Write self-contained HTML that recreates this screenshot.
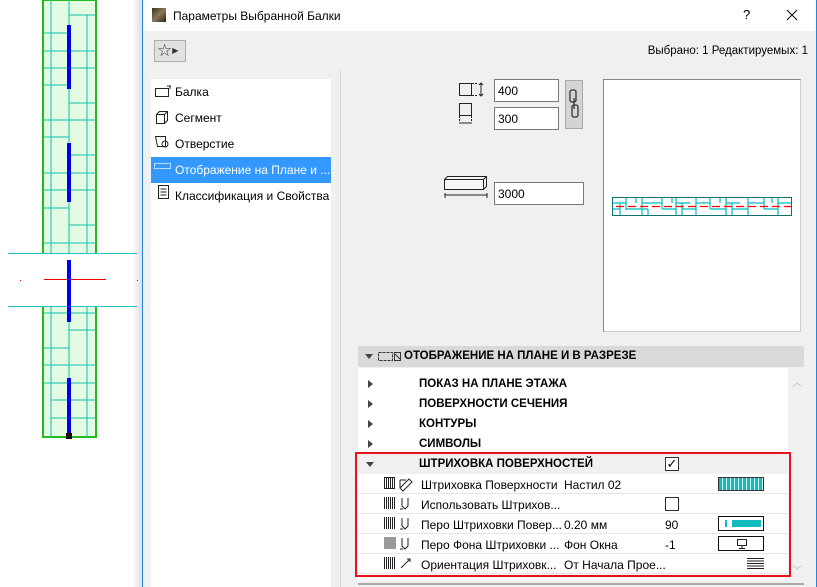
<!DOCTYPE html>
<html><head><meta charset="utf-8"><style>
*{box-sizing:border-box;margin:0;padding:0}
body{width:817px;height:587px;overflow:hidden;background:#fff;font-family:"Liberation Sans",sans-serif;font-size:12px;color:#000;position:relative}
.a{position:absolute}
.inp{position:absolute;background:#fff;border:1px solid #7a7a7a;height:23px;padding:4px 3px;font-size:12px}
.row{position:absolute;left:358px;width:430px;height:20px;font-size:12px}
.hd{font-weight:bold;font-size:11.5px}
.tri{position:absolute;left:10px;top:6px;width:0;height:0;border-left:5px solid #444;border-top:4px solid transparent;border-bottom:4px solid transparent}
.trid{position:absolute;left:8px;top:8px;width:0;height:0;border-top:5px solid #444;border-left:4px solid transparent;border-right:4px solid transparent}
.li{position:absolute;left:151px;width:180px;height:26px;padding:6px 0 0 24px}
</style></head><body>
<svg class="a" style="left:0;top:0" width="140" height="587">
<rect x="43" y="0" width="53" height="437" fill="#e3fbe3" stroke="#22bb22" stroke-width="2"/>
<g stroke="#10c0a8" stroke-width="1">
<line x1="69" y1="0" x2="69" y2="437"/>
<line x1="51" y1="0" x2="51" y2="437"/><line x1="87" y1="15" x2="87" y2="437"/>
<line x1="43" y1="33" x2="69" y2="33"/><line x1="69" y1="15" x2="96" y2="15"/>
<line x1="43" y1="51" x2="96" y2="51"/><line x1="43" y1="68" x2="96" y2="68"/>
<line x1="43" y1="85" x2="69" y2="85"/><line x1="69" y1="103" x2="96" y2="103"/>
<line x1="43" y1="120" x2="96" y2="120"/><line x1="43" y1="137" x2="69" y2="137"/>
<line x1="69" y1="155" x2="96" y2="155"/><line x1="43" y1="173" x2="96" y2="173"/>
<line x1="43" y1="190" x2="96" y2="190"/><line x1="43" y1="208" x2="69" y2="208"/>
<line x1="69" y1="225" x2="96" y2="225"/><line x1="43" y1="243" x2="96" y2="243"/>
<line x1="43" y1="313" x2="96" y2="313"/><line x1="69" y1="330" x2="96" y2="330"/>
<line x1="43" y1="348" x2="69" y2="348"/><line x1="43" y1="365" x2="96" y2="365"/>
<line x1="43" y1="383" x2="96" y2="383"/><line x1="51" y1="400" x2="96" y2="400"/>
<line x1="51" y1="418" x2="96" y2="418"/>
</g>
<rect x="8" y="253" width="130" height="53" fill="#fff"/>
<rect x="8" y="253" width="129" height="1" fill="#1fc2c8"/>
<rect x="8" y="306" width="129" height="1" fill="#1fc2c8"/>
<rect x="44" y="279" width="62" height="1" fill="#ee0000"/>
<rect x="20" y="280" width="1" height="1" fill="#e00"/><rect x="137" y="280" width="1" height="1" fill="#e00"/>
<g fill="#0000ee"><rect x="67" y="25" width="4" height="64"/><rect x="67" y="143" width="4" height="59"/><rect x="67" y="260" width="4" height="62"/><rect x="67" y="378" width="4" height="59"/></g>
<rect x="66" y="433" width="6" height="6" fill="#000"/>
</svg>
<div class="a" style="left:132px;top:0;width:10px;height:587px;background:linear-gradient(90deg,rgba(0,0,0,0),rgba(0,0,0,0.12))"></div>
<div class="a" style="left:142px;top:0;width:675px;height:587px;background:#f0f0f0;border-left:1px solid #1e88e5;border-right:1px solid #1e88e5"></div>
<div class="a" style="left:143px;top:0;width:673px;height:31px;background:#fff"></div>
<div class="a" style="left:152px;top:8px;width:14px;height:14px;background:linear-gradient(135deg,#3a3020,#8a7a5a 50%,#2a2418)"></div>
<div class="a" style="left:173px;top:9px;font-size:12px">Параметры Выбранной Балки</div>
<div class="a" style="left:743px;top:7px;font-size:13px">?</div>
<svg class="a" style="left:786px;top:9px" width="12" height="12" stroke="#111" stroke-width="1.1"><path d="M1 1l10 10M11 1L1 11"/></svg>
<div class="a" style="left:154px;top:40px;width:32px;height:22px;background:#e1e1e1;border:1px solid #adadad;font-size:17px;line-height:19px;padding-left:2px;color:#333">☆<span style="font-size:8px;vertical-align:3px">▶</span></div>
<div class="a" style="right:9px;top:45px;font-size:11.5px">Выбрано: 1 Редактируемых: 1</div>
<div class="a" style="left:151px;top:79px;width:180px;height:508px;background:#fff"></div>
<div class="li" style="top:79px">Балка</div>
<div class="li" style="top:105px">Сегмент</div>
<div class="li" style="top:131px">Отверстие</div>
<div class="li" style="top:157px;background:#3399ff;color:#fff">Отображение на Плане и ...</div>
<div class="li" style="top:183px">Классификация и Свойства</div>
<svg class="a" style="left:154px;top:84px" width="18" height="125" fill="none" stroke="#222">
<rect x="1.5" y="4.5" width="13" height="8"/><path d="M13 2h4M16 2v3"/>
<path d="M2.5 30.5l3-3h8v9l-3 3h-8zM2.5 30.5h8v9M10.5 30.5l3-3"/>
<path d="M1.5 52.5h10v10h-8zM8 60a3 3 0 1 0 6 0a3 3 0 1 0-6 0"/>
<rect x="0.5" y="79.5" width="16" height="5" stroke="#fff" stroke-dasharray="2 1"/>
<rect x="4.5" y="101.5" width="10" height="13"/><path d="M6.5 105h6M6.5 108h6M6.5 111h6"/>
</svg>
<div class="a" style="left:340px;top:70px;width:1px;height:517px;background:#d8d8d8"></div>
<svg class="a" style="left:458px;top:78px" width="30" height="55" fill="none" stroke="#222">
<rect x="1.5" y="5.5" width="12" height="12"/><path d="M14 5.5h6M14 17.5h6" stroke-dasharray="2 1"/><path d="M23 5v13M21 7l2-2 2 2M21 16l2 2 2-2"/>
<rect x="1.5" y="25.5" width="12" height="12"/><path d="M1.5 38v6M13.5 38v6" stroke-dasharray="2 1"/><path d="M1 45h13"/>
</svg>
<div class="inp" style="left:494px;top:79px;width:65px">400</div>
<div class="inp" style="left:494px;top:107px;width:65px">300</div>
<div class="a" style="left:565px;top:80px;width:18px;height:49px;background:#d4d4d4;border:1px solid #aaa"></div>
<svg class="a" style="left:568px;top:88px" width="12" height="32" fill="none" stroke="#333" stroke-width="1.3"><rect x="2" y="2" width="6" height="12" rx="2"/><rect x="4" y="17" width="6" height="12" rx="2"/><path d="M6 10v11"/></svg>
<svg class="a" style="left:443px;top:176px" width="45" height="30" fill="none" stroke="#222"><path d="M1.5 3.5l3-3h39v10l-3 3h-39z" fill="#f7f7f7"/><path d="M1.5 3.5h39v10M40.5 3.5l3-3"/><path d="M2 19h42M2 17v5M44 17v5"/></svg>
<div class="inp" style="left:494px;top:182px;width:90px">3000</div>
<div class="a" style="left:603px;top:79px;width:198px;height:253px;background:#fff;border:1px solid #888;border-right-color:#ccc;border-bottom-color:#ccc"></div>
<svg class="a" style="left:612px;top:197px" width="181" height="20" fill="none" stroke="#00bcbc" stroke-width="1.2">
<path d="M0 6h14M0 12h8M8 6v12M14 0v13M14 12h16M24 0v6M30 0v18M30 6h14M30 12h6M36 12v6M36 6h14M50 0v12M50 12h14M60 0v6M64 0v18M64 6h14M70 6v12M70 12h14M84 0v18M84 6h14M98 0v12M98 12h16M108 0v6M114 0v18M114 6h14M120 6v12M120 12h16M136 0v18M136 6h16M152 0v12M152 12h14M160 0v6M166 0v18M166 6h14"/>
<rect x="0.5" y="0.5" width="179" height="18" stroke="#107070" stroke-width="1"/>
<path d="M4 9.5h175" stroke="#f00" stroke-dasharray="8 4"/>
</svg>
<div class="a" style="left:358px;top:346px;width:446px;height:21px;background:#d9d9d9;border-radius:2px"></div>
<div class="a" style="left:365px;top:354px;border-top:5px solid #444;border-left:4px solid transparent;border-right:4px solid transparent"></div>
<svg class="a" style="left:378px;top:350px" width="24" height="12" fill="none" stroke="#333"><rect x="0.5" y="2.5" width="14" height="8" stroke-dasharray="3 1"/><rect x="16.5" y="2.5" width="6" height="8"/><path d="M17 4l5 5"/></svg>
<div class="a hd" style="left:404px;top:350px">ОТОБРАЖЕНИЕ НА ПЛАНЕ И В РАЗРЕЗЕ</div>
<div class="a" style="left:358px;top:368px;width:430px;height:212px;background:#fff"></div>
<div class="a" style="left:788px;top:368px;width:16px;height:212px;background:#f0f0f0"></div>
<div class="a" style="left:792px;top:374px;font-size:10px;color:#bbb">︿</div>
<div class="a" style="left:792px;top:562px;font-size:10px;color:#bbb">﹀</div>
<div class="a" style="left:358px;top:583px;width:446px;height:2px;background:#aaa"></div>
<div class="row" style="top:374px"><div class="tri"></div><div class="a hd" style="left:61px;top:4px">ПОКАЗ НА ПЛАНЕ ЭТАЖА</div></div>
<div class="row" style="top:394px"><div class="tri"></div><div class="a hd" style="left:61px;top:4px">ПОВЕРХНОСТИ СЕЧЕНИЯ</div></div>
<div class="row" style="top:414px"><div class="tri"></div><div class="a hd" style="left:61px;top:4px">КОНТУРЫ</div></div>
<div class="row" style="top:434px"><div class="tri"></div><div class="a hd" style="left:61px;top:4px">СИМВОЛЫ</div></div>
<div class="row" style="top:454px;background:#f0f0f0"><div class="trid"></div><div class="a hd" style="left:61px;top:4px">ШТРИХОВКА ПОВЕРХНОСТЕЙ</div>
<div class="a" style="left:307px;top:3px;width:14px;height:14px;border:1px solid #333;background:#fff;font-size:13px;line-height:12px;text-align:center">✓</div></div>
<div class="row" style="top:474px;border-bottom:1px solid #e6e6e6"><div class="a" style="left:63px;top:4px">Штриховка Поверхности</div><div class="a" style="left:206px;top:4px">Настил 02</div>
<div class="a" style="left:360px;top:3px;width:46px;height:14px;border:1px solid #333;background:repeating-linear-gradient(90deg,#13bcbc 0 3px,#d8f4f4 3px 4px),#13bcbc"></div></div>
<div class="row" style="top:494px;border-bottom:1px solid #e6e6e6"><div class="a" style="left:63px;top:4px">Использовать Штрихов...</div>
<div class="a" style="left:307px;top:3px;width:14px;height:14px;border:1px solid #333;background:#fff"></div></div>
<div class="row" style="top:514px;border-bottom:1px solid #e6e6e6"><div class="a" style="left:63px;top:4px">Перо Штриховки Повер...</div><div class="a" style="left:206px;top:4px">0.20 мм</div><div class="a" style="left:307px;top:4px">90</div>
<div class="a" style="left:360px;top:2px;width:46px;height:15px;border:1px solid #111;background:#fff"><div class="a" style="left:6px;top:3px;width:2px;height:7px;background:#13bcbc"></div><div class="a" style="left:13px;top:3px;width:29px;height:7px;background:#13bcbc"></div></div></div>
<div class="row" style="top:534px;border-bottom:1px solid #e6e6e6"><div class="a" style="left:63px;top:4px">Перо Фона Штриховки ...</div><div class="a" style="left:206px;top:4px">Фон Окна</div><div class="a" style="left:307px;top:4px">-1</div>
<div class="a" style="left:360px;top:2px;width:46px;height:15px;border:1px solid #111;background:#fff"><svg class="a" style="left:18px;top:2px" width="10" height="10" fill="none" stroke="#222"><rect x="0.5" y="0.5" width="9" height="6"/><path d="M5 7v2M2 9.5h6"/></svg></div></div>
<div class="row" style="top:554px;border-bottom:1px solid #e6e6e6"><div class="a" style="left:63px;top:4px">Ориентация Штриховк...</div><div class="a" style="left:206px;top:4px">От Начала Прое...</div>
<div class="a" style="left:389px;top:4px;width:17px;height:12px;background:repeating-linear-gradient(180deg,#222 0 1px,transparent 1px 2.5px)"></div></div>
<svg class="a" style="left:383px;top:476px" width="32" height="100" fill="none" stroke="#222">
<g stroke-width="1"><path d="M1.5 1v12M3.5 1v12M5.5 1v12M7.5 1v12M9.5 1v12M11.5 1v12"/><path d="M1 1.5h11M1 12.5h11"/>
<path d="M1.5 21v12M3.5 21v12M5.5 21v12M7.5 21v12M9.5 21v12M11.5 21v12"/>
<path d="M1.5 41v12M3.5 41v12M5.5 41v12M7.5 41v12M9.5 41v12M11.5 41v12"/>
<path d="M1.5 81v12M3.5 81v12M5.5 81v12M7.5 81v12M9.5 81v12M11.5 81v12"/></g>
<rect x="1" y="61" width="12" height="12" fill="#999" stroke="none"/>
<path d="M17 12l9-9 3 3-9 9zM17 4h6M17 4v8"/>
<path d="M19 22v8l3 3 3-3v-8M17 33h3" /><path d="M19 42v8l3 3 3-3v-8M17 53h3"/><path d="M19 62v8l3 3 3-3v-8M17 73h3"/>
<path d="M18 92l9-9M24 83h3v3"/>
</svg>
<div class="a" style="left:355px;top:452px;width:436px;height:125px;border:2px solid #e8121b"></div>
</body></html>
